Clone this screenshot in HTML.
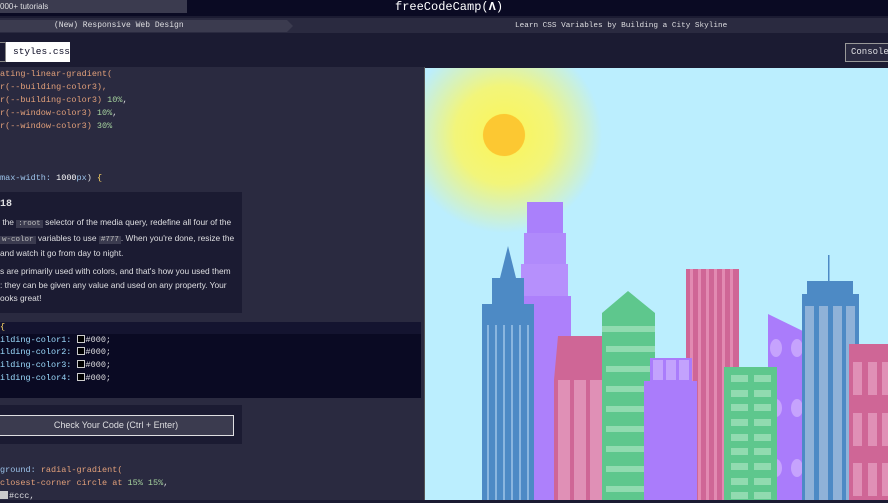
<!DOCTYPE html>
<html><head><meta charset="utf-8"><style>
*{margin:0;padding:0;box-sizing:border-box}
body{width:888px;height:500px;overflow:hidden;background:#1b1b32;position:relative;font-family:"Liberation Mono",monospace}
.a{position:absolute}
.code{font-size:8.5px;line-height:13px;white-space:pre;color:#dfdfe2}
.s{color:#e2a07a}.n{color:#a8d5a0}.p{color:#9cc3ea}.k{color:#9cdcfe}
.sw{display:inline-block;width:8px;height:8px;border:1px solid #ccc;background:#000;vertical-align:-1px;margin-right:1px}
.t{font-family:"Liberation Sans",sans-serif;font-size:8.4px;line-height:13.5px;color:#dfdfe2}
.c{font-family:"Liberation Mono",monospace;background:#3b3b4f;color:#bbb;font-size:7.5px;padding:0 2px}
</style></head><body>
<div class="a" style="left:0;top:0;width:888px;height:16px;background:#0a0a23"></div>
<div class="a" style="left:0;top:0;width:187px;height:13px;background:#3b3b4f;font-family:'Liberation Sans',sans-serif;font-size:8px;color:#dfdfe2;line-height:13px">000+ tutorials</div>
<div class="a" style="left:395px;top:-1px;color:#fff;font-size:12px;line-height:16px">freeCodeCamp(<b>&#923;</b>)</div>
<div class="a" style="left:0;top:16px;width:888px;height:2px;background:#1b1b32"></div>
<div class="a" style="left:0;top:18px;width:888px;height:15px;background:#2a2a40"></div>
<div class="a" style="left:0;top:20px;width:287px;height:12px;background:#3b3b4f"></div>
<div class="a" style="left:287px;top:20px;width:0;height:0;border-top:6px solid transparent;border-bottom:6px solid transparent;border-left:6px solid #3b3b4f"></div>
<div class="a" style="left:54px;top:20px;font-size:8px;line-height:12px;color:#dfdfe2">(New) Responsive Web Design</div>
<div class="a" style="left:515px;top:20px;font-size:7.7px;line-height:12px;color:#dfdfe2">Learn CSS Variables by Building a City Skyline</div>
<div class="a" style="left:0;top:42px;width:6px;height:20px;border:1px solid #888;border-left:none;background:#1b1b32"></div>
<div class="a" style="left:6px;top:42px;width:64px;height:20px;background:#fff;color:#0a0a23;font-size:9.5px;line-height:20px;padding-left:7px">styles.css</div>
<div class="a" style="left:845px;top:43px;width:50px;height:19px;border:1px solid #999;background:#2a2a40;color:#dfdfe2;font-size:9px;line-height:17px;padding-left:5px">Console</div>
<div class="a" style="left:0;top:67px;width:424px;height:433px;background:#2a2a40"></div>
<div class="a" style="left:424px;top:67px;width:1px;height:433px;background:#555"></div>
<div class="a code" style="left:0;top:68px"><span class="s">ating-linear-gradient(</span>
<span class="s">r(--building-color3),</span>
<span class="s">r(--building-color3) </span><span class="n">10%</span>,
<span class="s">r(--window-color3) </span><span class="n">10%</span>,
<span class="s">r(--window-color3) </span><span class="n">30%</span>



<span class="p">max-width:</span> <b style="font-weight:normal;color:#fff">1000</b><span class="p">px</span>) <span style="color:#ffd866">{</span></div>
<div class="a" style="left:0;top:192px;width:242px;height:121px;background:#1b1b32"></div>
<div class="a t" style="left:0;top:198px;font-weight:bold;font-size:10px;font-family:'Liberation Mono',monospace">18</div>
<div class="a t" style="left:0;top:216px;white-space:nowrap">&nbsp;the <span class="c">:root</span> selector of the media query, redefine all four of the<br><span class="c">w-color</span> variables to use <span class="c">#777</span>. When you're done, resize the<br>and watch it go from day to night.</div>
<div class="a t" style="left:0;top:265px;white-space:nowrap">s are primarily used with colors, and that's how you used them<br>: they can be given any value and used on any property. Your<br>ooks great!</div>
<div class="a" style="left:0;top:322px;width:421px;height:76px;background:#0a0a23"></div>
<div class="a" style="left:0;top:322px;width:421px;height:12px;background:#141430"></div>
<div class="a code" style="left:0;top:321px;line-height:12.7px"><span style="color:#ffd866">{</span>
<span class="k">ilding-color1:</span> <span class="sw"></span>#000;
<span class="k">ilding-color2:</span> <span class="sw"></span>#000;
<span class="k">ilding-color3:</span> <span class="sw"></span>#000;
<span class="k">ilding-color4:</span> <span class="sw"></span>#000;</div>
<div class="a" style="left:0;top:405px;width:242px;height:39px;background:#1b1b32"></div>
<div class="a" style="left:-2px;top:415px;width:236px;height:21px;background:#3b3b4f;border:1px solid #dfdfe2;color:#dfdfe2;font-family:'Liberation Sans',sans-serif;font-size:9px;line-height:19px;text-align:center">Check Your Code (Ctrl + Enter)</div>
<div class="a code" style="left:0;top:464px"><span class="p">ground:</span> <span class="s">radial-gradient(</span>
<span class="s">closest-corner circle at </span><span class="n">15% 15%</span>,
<span class="sw" style="background:#ccc"></span>#ccc,</div>
<svg class="a" style="left:425px;top:68px" width="463" height="432" viewBox="425 68 463 432">
<defs>
<radialGradient id="sun" cx="504" cy="135" r="98" gradientUnits="userSpaceOnUse">
<stop offset="0" stop-color="#fcd033"/><stop offset="0.2" stop-color="#fcd033"/><stop offset="0.22" stop-color="#f8f566"/><stop offset="0.5" stop-color="#f2f57a"/><stop offset="1" stop-color="#bbeefe"/></radialGradient>
</defs>
<rect x="425" y="68" width="463" height="432" fill="#bbeefe"/>
<circle cx="504" cy="135" r="98" fill="url(#sun)"/>
<circle cx="504" cy="135" r="21" fill="#fcc832"/>
<rect x="527" y="202" width="36" height="31" fill="#aa80fb"/>
<rect x="524" y="233" width="42" height="31" fill="#b08afb"/>
<rect x="521" y="264" width="47" height="32" fill="#b690fc"/>
<rect x="524" y="296" width="47" height="204" fill="#ad80fb"/>
<polygon points="508,246 500,278 516,278" fill="#4d8ac5"/>
<rect x="492" y="278" width="32" height="30" fill="#4d8ac5"/>
<rect x="482" y="304" width="52" height="196" fill="#4d8ac5"/>
<g fill="#8ab6df"><rect x="487" y="325" width="2" height="175"/><rect x="495" y="325" width="2" height="175"/><rect x="503" y="325" width="2" height="175"/><rect x="511" y="325" width="2" height="175"/><rect x="519" y="325" width="2" height="175"/><rect x="527" y="325" width="2" height="175"/></g>
<polygon points="558,336 602,336 606,380 554,380" fill="#cf6696"/>
<rect x="554" y="380" width="52" height="120" fill="#cf6696"/>
<g fill="#e090b6"><rect x="558" y="380" width="12" height="120"/><rect x="574" y="380" width="12" height="120"/><rect x="590" y="380" width="12" height="120"/></g>
<polygon points="602,313 628,291 655,313 655,500 602,500" fill="#5ec78d"/>
<g fill="#91dbb0"><rect x="602" y="326" width="53" height="6"/><rect x="606" y="346" width="49" height="6"/><rect x="606" y="366" width="49" height="6"/><rect x="606" y="386" width="49" height="6"/><rect x="606" y="406" width="49" height="6"/><rect x="606" y="426" width="49" height="6"/><rect x="606" y="446" width="49" height="6"/><rect x="606" y="466" width="49" height="6"/><rect x="606" y="486" width="49" height="6"/></g>
<rect x="686" y="269" width="53" height="231" fill="#cf6696"/>
<g fill="#e28ab2"><rect x="690" y="269" width="3" height="231"/><rect x="698" y="269" width="3" height="231"/><rect x="706" y="269" width="3" height="231"/><rect x="714" y="269" width="3" height="231"/><rect x="722" y="269" width="3" height="231"/><rect x="730" y="269" width="3" height="231"/></g>
<rect x="650" y="358" width="42" height="23" fill="#aa7cfb"/>
<g fill="#c3a2fd"><rect x="653" y="360" width="10" height="20"/><rect x="666" y="360" width="10" height="20"/><rect x="679" y="360" width="10" height="20"/></g>
<rect x="644" y="381" width="53" height="119" fill="#aa7cfb"/>
<polygon points="768,314 811,335 811,500 768,500" fill="#aa7cfb"/>
<g fill="#c6a3fd"><ellipse cx="776" cy="348" rx="6" ry="9"/><ellipse cx="797" cy="348" rx="6" ry="9"/><ellipse cx="776" cy="408" rx="6" ry="9"/><ellipse cx="797" cy="408" rx="6" ry="9"/><ellipse cx="776" cy="468" rx="6" ry="9"/><ellipse cx="797" cy="468" rx="6" ry="9"/></g>
<rect x="724" y="367" width="53" height="133" fill="#5ec78d"/>
<g fill="#91dbb0">
<rect x="731" y="375" width="17" height="7"/><rect x="754" y="375" width="17" height="7"/>
<rect x="731" y="390" width="17" height="7"/><rect x="754" y="390" width="17" height="7"/>
<rect x="731" y="404" width="17" height="7"/><rect x="754" y="404" width="17" height="7"/>
<rect x="731" y="419" width="17" height="7"/><rect x="754" y="419" width="17" height="7"/>
<rect x="731" y="434" width="17" height="7"/><rect x="754" y="434" width="17" height="7"/>
<rect x="731" y="448" width="17" height="7"/><rect x="754" y="448" width="17" height="7"/>
<rect x="731" y="463" width="17" height="7"/><rect x="754" y="463" width="17" height="7"/>
<rect x="731" y="478" width="17" height="7"/><rect x="754" y="478" width="17" height="7"/>
<rect x="731" y="492" width="17" height="7"/><rect x="754" y="492" width="17" height="7"/></g>
<rect x="828" y="255" width="1.5" height="26" fill="#4d8ac5"/>
<rect x="807" y="281" width="46" height="14" fill="#4d8ac5"/>
<rect x="802" y="294" width="57" height="206" fill="#4d8ac5"/>
<g fill="#8fb2d8"><rect x="805" y="306" width="9" height="194"/><rect x="819" y="306" width="9" height="194"/><rect x="833" y="306" width="9" height="194"/><rect x="846" y="306" width="9" height="194"/></g>
<rect x="849" y="344" width="39" height="156" fill="#cf6696"/>
<g fill="#e090b6"><rect x="853" y="362" width="9" height="33"/><rect x="868" y="362" width="9" height="33"/><rect x="882" y="362" width="6" height="33"/><rect x="853" y="413" width="9" height="33"/><rect x="868" y="413" width="9" height="33"/><rect x="882" y="413" width="6" height="33"/><rect x="853" y="463" width="9" height="33"/><rect x="868" y="463" width="9" height="33"/><rect x="882" y="463" width="6" height="33"/></g>
</svg>
</body></html>
